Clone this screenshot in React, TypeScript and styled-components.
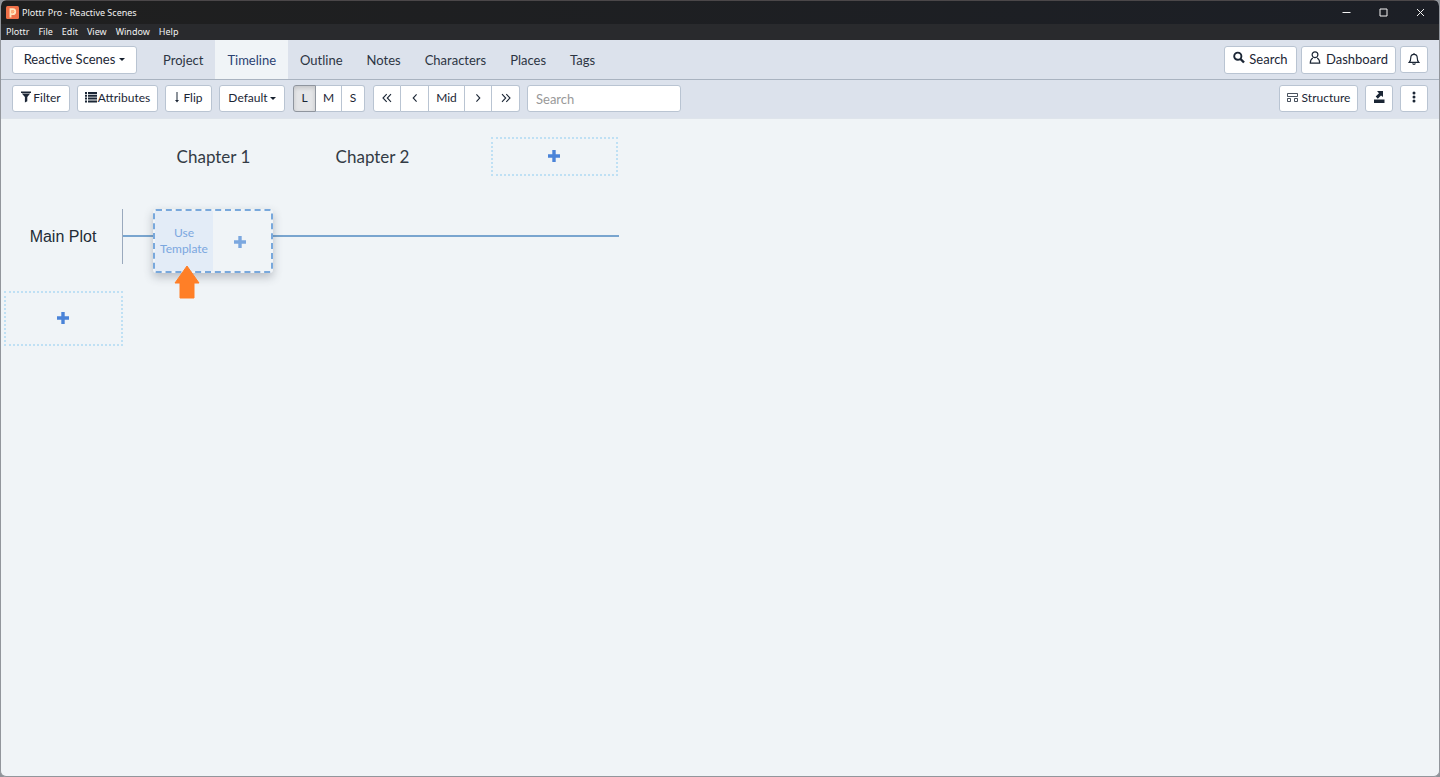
import React from "react";
import styled, { createGlobalStyle } from "styled-components";

const GlobalStyle = createGlobalStyle`
  *, *::before, *::after { box-sizing: border-box; }
  body {
    margin: 0;
    background: #8f9399;
    color: #1b2635;
    font-family: Lato, "Open Sans", sans-serif;
    font-size: 12px;
  }
  button, input { font: inherit; color: inherit; }
  button { cursor: pointer; }
`;

const Window = styled.div`
  display: flex;
  flex-direction: column;
  min-height: 100vh;
  background: #f0f4f7;
  border: solid #92969c;
  border-width: 0 1px 1px;
  border-radius: 6px;
  overflow: hidden;
`;

const TitleBar = styled.header`
  display: flex;
  align-items: center;
  height: 24px;
  padding-left: 5px;
  background: linear-gradient(90deg, #1f1f1f, #1c1f26);
  border-top: 1px solid #4b4749;
  color: #f2f2f2;
  font-family: "Noto Sans", sans-serif;
  font-size: 9px;
`;

const Title = styled.span`
  flex: 1;
  padding-left: 3px;
`;

const WindowButton = styled.button`
  display: grid;
  place-items: center;
  width: 37px;
  height: 23px;
  padding: 0;
  border: 0;
  background: none;
  color: #f2f2f2;
`;

const MenuBar = styled.nav`
  display: flex;
  align-items: center;
  gap: 9px;
  height: 16px;
  padding-left: 5px;
  background: #292a2d;
`;

const MenuItem = styled.button`
  padding: 0;
  border: 0;
  background: none;
  color: #f2f2f2;
  font-family: "Noto Sans", sans-serif;
  font-size: 9px;
  line-height: 16px;
`;

const Bar = styled.div<{ $nav?: boolean }>`
  display: flex;
  align-items: ${(p) => (p.$nav ? "stretch" : "flex-start")};
  height: ${(p) => (p.$nav ? 40 : 39)}px;
  padding: ${(p) => (p.$nav ? "0" : "5px")} 11px 0;
  background: #dce2ec;
  border-bottom: 1px solid ${(p) => (p.$nav ? "#a9b3c0" : "#dee4eb")};
`;

const Group = styled.div<{ $gap: number; $end?: boolean }>`
  display: flex;
  align-items: center;
  gap: ${(p) => p.$gap}px;
  margin-left: ${(p) => (p.$end ? "auto" : "0")};
`;

const Tabs = styled.nav`
  display: flex;
  margin-left: 14px;
`;

const Tab = styled.a<{ $active?: boolean }>`
  display: flex;
  align-items: center;
  padding: 0 12px;
  color: ${(p) => (p.$active ? "#2b4272" : "#2c3543")};
  background: ${(p) => (p.$active ? "#f0f4f7" : "transparent")};
  font-size: 13px;
  text-decoration: none;
`;

const Button = styled.button<{ $width: number; $large?: boolean; $gap?: number }>`
  display: flex;
  align-items: center;
  justify-content: center;
  gap: ${(p) => p.$gap ?? 4}px;
  width: ${(p) => p.$width}px;
  height: ${(p) => (p.$large ? 28 : 27)}px;
  padding: 0 0 2px;
  border: 1px solid #b9c4d2;
  border-radius: 3px;
  background: #fff;
  font-size: ${(p) => (p.$large ? 13 : 12)}px;
  white-space: nowrap;
  svg { margin-bottom: 1px; }
`;

const Segments = styled.div`
  display: flex;
  margin-left: 1px;
`;

const Segment = styled.button<{ $width: number; $pressed?: boolean }>`
  display: grid;
  place-items: center;
  width: ${(p) => p.$width}px;
  height: 27px;
  padding: 0 0 2px;
  border: 1px solid ${(p) => (p.$pressed ? "#8f959e" : "#b9c4d2")};
  background: ${(p) => (p.$pressed ? "#e4e5e7" : "#fff")};
  box-shadow: ${(p) => (p.$pressed ? "inset 0 2px 4px rgba(0, 0, 0, 0.14)" : "none")};
  &:first-child { border-radius: 3px 0 0 3px; }
  &:last-child { border-radius: 0 3px 3px 0; }
  & + & { border-left-width: 0; }
`;

const SearchInput = styled.input`
  width: 154px;
  height: 27px;
  padding: 0 8px;
  border: 1px solid #b9c4d2;
  border-radius: 3px;
  background: #fff;
  font-size: 13px;
  &::placeholder { color: #999; opacity: 1; }
`;

const Caret = styled.span`
  margin-top: 2px;
  border: solid transparent;
  border-width: 3px 3px 0;
  border-top-color: #16202e;
`;

const Canvas = styled.main`
  flex: 1;
  padding: 18px 3px;
`;

const Chapters = styled.div`
  display: flex;
  align-items: flex-start;
  padding-left: 130px;
`;

const Chapter = styled.h2`
  width: 159px;
  margin: 0;
  color: #333b45;
  font-size: 17px;
  font-weight: 400;
  line-height: 40px;
  text-align: center;
`;

const AddBox = styled.button<{ $width: number; $height: number }>`
  display: grid;
  place-items: center;
  width: ${(p) => p.$width}px;
  height: ${(p) => p.$height}px;
  padding: 0 1px 2px 0;
  border: 2px dotted #bfe0f4;
  background: none;
  color: #4a83d8;
`;

const ChapterSlot = styled.div`
  padding-left: 39px;
`;

const PlotRow = styled.section`
  display: flex;
  align-items: flex-start;
  width: 615px;
  height: 82px;
  margin-top: 32px;
`;

const PlotTitle = styled.h3`
  width: 119px;
  margin: 0;
  border-right: 1px solid #9aa9bd;
  color: #222b36;
  font-family: "Liberation Sans", Arial, sans-serif;
  font-size: 16px;
  font-weight: 400;
  line-height: 55px;
  text-align: center;
`;

const PlotLine = styled.div<{ $width?: number }>`
  flex: ${(p) => (p.$width ? `0 0 ${p.$width}px` : "1")};
  height: 2px;
  margin-top: 26px;
  background: #79a5cf;
`;

const Card = styled.div`
  position: relative;
  display: flex;
  width: 120px;
  height: 64px;
  border: 2px dashed #78a8dc;
  border-radius: 3px;
  box-shadow: 0 4px 10px rgba(50, 60, 75, 0.3);
  background: #f0f4f7;
`;

const CardAction = styled.button<{ $tinted?: boolean }>`
  display: grid;
  place-items: center;
  flex: 0 0 58px;
  padding: ${(p) => (p.$tinted ? "0" : "2px 4px 0 0")};
  border: 0;
  background: ${(p) => (p.$tinted ? "#e3ecf7" : "none")};
  color: #7ba7df;
  font-size: 12px;
  line-height: 16px;
`;

const Pointer = styled.svg`
  position: absolute;
  left: 19px;
  top: 54px;
`;

const Plus = () => (
  <svg width="12" height="12" viewBox="0 0 12 12" fill="currentColor" aria-hidden="true">
    <path d="M4.300 0h3.400v4.300H12v3.400H7.700V12H4.300V7.700H0V4.300h4.300z" />
  </svg>
);

const Logo = () => (
  <svg width="13" height="13" viewBox="0 0 13 13" aria-hidden="true">
    <rect width="13" height="13" rx="1.5" fill="#ee7048" />
    <path d="M4.500 11.500V3.300h2.300a2.400 2.400 0 0 1 0 4.800H5.400" fill="none" stroke="#ffe4bd" strokeWidth="1.9" />
    <path d="M5.400 4.200h1.400a1.400 1.400 0 0 1 0 2.800H5.400z" fill="#ffb47c" />
  </svg>
);

const FilterIcon = () => (
  <svg width="10" height="12" viewBox="0 0 10 12" fill="currentColor" aria-hidden="true">
    <path d="M0 .5h10V2H0zM.8 2.600h8.400L6.300 6v4.200L3.900 11.500V6z" />
  </svg>
);

const ListIcon = () => (
  <svg width="12" height="12" viewBox="0 0 12 12" fill="currentColor" aria-hidden="true">
    <path d="M0 1h2v2H0zM3 1h9v2H3zM0 3.8h2v2H0zM3 3.8h9v2H3zM0 6.6h2v2H0zM3 6.6h9v2H3zM0 9.4h2v2H0zM3 9.4h9v2H3z" />
  </svg>
);

const DownArrow = () => (
  <svg width="6" height="12" viewBox="0 0 6 12" fill="currentColor" aria-hidden="true">
    <path d="M2.500 1h1v8H5l-2 2.500L1 9h1.500z" />
  </svg>
);

const Chevron = ({ double, flip }: { double?: boolean; flip?: boolean }) => (
  <svg width="10" height="10" viewBox="0 0 10 10" fill="none" stroke="currentColor" strokeWidth="1.1" aria-hidden="true">
    <g transform={flip ? "rotate(180 5 5)" : undefined}>
      {double ? <path d="M4.7 1.2 1 5l3.7 3.8M9 1.2 5.3 5 9 8.8" /> : <path d="M6.6 1.4 3.2 5l3.4 3.6" />}
    </g>
  </svg>
);

const SearchIcon = () => (
  <svg width="12" height="14" viewBox="0 0 12 14" fill="none" stroke="currentColor" aria-hidden="true">
    <circle cx="4.8" cy="5.2" r="3.6" strokeWidth="1.9" />
    <path d="m7.5 8 3.5 3.5" strokeWidth="2.4" />
  </svg>
);

const UserIcon = () => (
  <svg width="12" height="14" viewBox="0 0 12 14" fill="none" stroke="currentColor" strokeWidth="1.2" aria-hidden="true">
    <circle cx="6" cy="3.8" r="2.9" />
    <path d="M3.8 6.900C2 7.900 1.300 9.100 1.300 12.100h9.400c0-3-.7-4.200-2.500-5.200" />
  </svg>
);

const BellIcon = () => (
  <svg width="12" height="14" viewBox="0 0 12 14" fill="none" stroke="currentColor" strokeWidth="1.2" aria-hidden="true">
    <path d="M6 2v1.200M1.200 11.400h9.600C9.400 10 9.200 8.800 9.200 6.600a3.200 3.200 0 0 0-6.400 0c0 2.200-.2 3.400-1.600 4.800zM4.800 12.200a1.200 1.200 0 0 0 2.400 0" />
  </svg>
);

const StructureIcon = () => (
  <svg width="11" height="10" viewBox="0 0 11 10" fill="none" stroke="currentColor" strokeWidth=".8" aria-hidden="true">
    <path d="M.5 1.500h10v3H.5zM.5 6.500h3v3h-3zM7.500 6.500h3v3h-3z" />
  </svg>
);

const ExportIcon = () => (
  <svg width="12" height="12" viewBox="0 0 12 12" fill="currentColor" aria-hidden="true">
    <path d="M1 8.500h10.500V12H1zM4 0h6v6L8 4.500 4.800 7.700 2.700 5.600 6 2.300z" />
  </svg>
);

const DotsIcon = () => (
  <svg width="4" height="12" viewBox="0 0 4 12" fill="currentColor" aria-hidden="true">
    <circle cx="2" cy="2" r="1.500" /><circle cx="2" cy="6" r="1.500" /><circle cx="2" cy="10" r="1.500" />
  </svg>
);

const menus = ["Plottr", "File", "Edit", "View", "Window", "Help"];
const tabs = ["Project", "Timeline", "Outline", "Notes", "Characters", "Places", "Tags"];
const windowControls = [
  { label: "Minimize", path: "M.500 4.500h8" },
  { label: "Maximize", path: "M1 1h7v7H1z" },
  { label: "Close", path: "m1 1 7 7M8 1 1 8" },
];

export default function App() {
  return (
    <Window>
      <GlobalStyle />
      <TitleBar>
        <Logo />
        <Title>Plottr Pro - Reactive Scenes</Title>
        {windowControls.map(({ label, path }) => (
          <WindowButton key={label} aria-label={label}>
            <svg width="9" height="9" viewBox="0 0 9 9" fill="none" stroke="currentColor">
              <path d={path} />
            </svg>
          </WindowButton>
        ))}
      </TitleBar>
      <MenuBar aria-label="Application menu">
        {menus.map((menu) => <MenuItem key={menu}>{menu}</MenuItem>)}
      </MenuBar>

      <Bar $nav>
        <Group $gap={0}>
          <Button $width={125} $large>Reactive Scenes <Caret /></Button>
        </Group>
        <Tabs aria-label="Sections">
          {tabs.map((tab) => (
            <Tab key={tab} href={`#${tab.toLowerCase()}`} $active={tab === "Timeline"}>{tab}</Tab>
          ))}
        </Tabs>
        <Group $gap={4} $end>
          <Button $width={73} $large><SearchIcon />Search</Button>
          <Button $width={95} $large $gap={5}><UserIcon />Dashboard</Button>
          <Button $width={28} aria-label="Notifications"><BellIcon /></Button>
        </Group>
      </Bar>

      <Bar>
        <Group $gap={7}>
          <Button $width={58} $gap={2}><FilterIcon />Filter</Button>
          <Button $width={81} $gap={1}><ListIcon />Attributes</Button>
          <Button $width={47} $gap={3}><DownArrow />Flip</Button>
          <Button $width={66} $gap={2}>Default<Caret /></Button>
          <Segments>
            <Segment $width={23} $pressed aria-pressed="true">L</Segment>
            <Segment $width={26}>M</Segment>
            <Segment $width={23}>S</Segment>
          </Segments>
          <Segments>
            <Segment $width={28} aria-label="Beginning"><Chevron double /></Segment>
            <Segment $width={28} aria-label="Back"><Chevron /></Segment>
            <Segment $width={36}>Mid</Segment>
            <Segment $width={27} aria-label="Forward"><Chevron flip /></Segment>
            <Segment $width={28} aria-label="End"><Chevron double flip /></Segment>
          </Segments>
          <SearchInput type="text" placeholder="Search" aria-label="Search timeline" />
        </Group>
        <Group $gap={7} $end>
          <Button $width={79}><StructureIcon />Structure</Button>
          <Button $width={28} aria-label="Export"><ExportIcon /></Button>
          <Button $width={28} aria-label="More"><DotsIcon /></Button>
        </Group>
      </Bar>

      <Canvas>
        <Chapters>
          <Chapter>Chapter 1</Chapter>
          <Chapter>Chapter 2</Chapter>
          <ChapterSlot>
            <AddBox $width={127} $height={39} aria-label="Add chapter"><Plus /></AddBox>
          </ChapterSlot>
        </Chapters>
        <PlotRow>
          <PlotTitle>Main Plot</PlotTitle>
          <PlotLine $width={30} />
          <Card>
            <CardAction $tinted>Use Template</CardAction>
            <CardAction aria-label="Add scene"><Plus /></CardAction>
            <Pointer width="26" height="34" viewBox="0 0 26 34" aria-hidden="true">
              <path d="M13 1 25 18h-5v15H6V18H1z" fill="#ff7f27" stroke="#ff7f27" strokeLinejoin="round" />
            </Pointer>
          </Card>
          <PlotLine />
        </PlotRow>
        <AddBox $width={119} $height={55} aria-label="Add plotline"><Plus /></AddBox>
      </Canvas>
    </Window>
  );
}
